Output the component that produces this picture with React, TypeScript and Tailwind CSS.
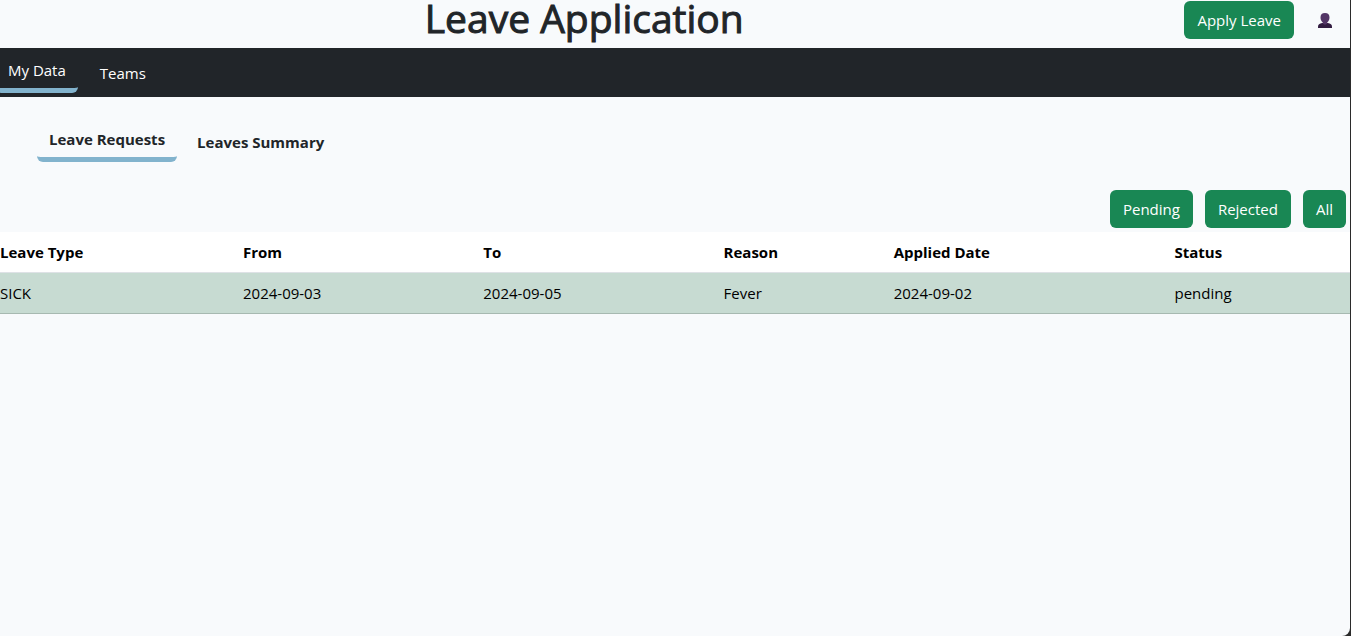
import { useState } from "react";

type Leave = {
  type: string;
  from: string;
  to: string;
  reason: string;
  applied: string;
  status: string;
};

const columns = [
  { label: "Leave Type", width: "w-[18%]" },
  { label: "From", width: "w-[17.8%]" },
  { label: "To", width: "w-[17.8%]" },
  { label: "Reason", width: "w-[12.6%]" },
  { label: "Applied Date", width: "w-[20.8%]" },
  { label: "Status", width: "w-[13%]" },
];

const leaves: Leave[] = [
  {
    type: "SICK",
    from: "2024-09-03",
    to: "2024-09-05",
    reason: "Fever",
    applied: "2024-09-02",
    status: "pending",
  },
];

function GreenButton({ children }: { children: string }) {
  return (
    <button
      type="button"
      className="h-[38px] rounded-md bg-[#198754] px-[13px] text-[15px] leading-6 whitespace-nowrap text-white"
    >
      {children}
    </button>
  );
}

function TabButton({
  label,
  active,
  onClick,
}: {
  label: string;
  active: boolean;
  onClick: () => void;
}) {
  return (
    <button
      type="button"
      onClick={onClick}
      className={
        active
          ? "rounded-md border-b-[5px] border-[#82b3cd] px-3 py-1.5"
          : "rounded-md px-3 py-1.5"
      }
    >
      {label}
    </button>
  );
}

function UserIcon() {
  return (
    <svg width="14" height="15" viewBox="0 0 14 15" aria-hidden="true">
      <path
        d="M0 15v-1.600c0-2 1.400-2.900 4.200-3.500h5.600c2.800.6 4.200 1.500 4.200 3.500V15z"
        fill="#321c41"
      />
      <path
        d="M7 0c2.900 0 4.500 1.600 4.500 4.200 0 2.300-.8 4.200-2.300 5.300v1.200L7 11.800l-2.200-1.100V9.500C3.300 8.400 2.500 6.500 2.500 4.200 2.500 1.600 4.100 0 7 0z"
        fill="#533566"
      />
    </svg>
  );
}

export default function App() {
  const [section, setSection] = useState("My Data");
  const [view, setView] = useState("Leave Requests");

  return (
    <div className="min-h-screen bg-[#2b2b2b] pr-px font-['Open_Sans','Noto_Sans',sans-serif] text-[15px] leading-6 text-[#212529]">
      <div className="min-h-screen rounded-br-lg bg-[#f8fafc]">
        <header className="flex h-12 items-start">
          <h1 className="flex-1 text-center text-[39px] leading-9 font-medium [-webkit-text-stroke:1px_currentColor]">
            Leave Application
          </h1>
          <div className="flex items-center gap-6 pt-px pr-[18px] pl-4">
            <GreenButton>Apply Leave</GreenButton>
            <button type="button" aria-label="Profile">
              <UserIcon />
            </button>
          </div>
        </header>

        <nav className="flex h-[49px] items-center bg-[#212529] text-white">
          <div className="-ml-1 flex items-center gap-2.5">
            {["My Data", "Teams"].map((label) => (
              <TabButton
                key={label}
                label={label}
                active={section === label}
                onClick={() => setSection(label)}
              />
            ))}
          </div>
        </nav>

        <main className="pt-6">
          <div className="flex items-center gap-2 pl-[37px] font-bold">
            {["Leave Requests", "Leaves Summary"].map((label) => (
              <TabButton
                key={label}
                label={label}
                active={view === label}
                onClick={() => setView(label)}
              />
            ))}
          </div>

          <div className="mt-7 mb-1 flex justify-end gap-3 pr-1">
            <GreenButton>Pending</GreenButton>
            <GreenButton>Rejected</GreenButton>
            <GreenButton>All</GreenButton>
          </div>

          <table className="w-full table-fixed border-collapse text-left text-black">
            <thead>
              <tr className="h-10 border-b border-[#dee2e6] bg-white">
                {columns.map((column) => (
                  <th key={column.label} className={column.width}>
                    {column.label}
                  </th>
                ))}
              </tr>
            </thead>
            <tbody>
              {leaves.map((leave) => (
                <tr
                  key={leave.from}
                  className="h-[41px] border-b border-[#a7b9b1] bg-[#c7dbd2]"
                >
                  <td>{leave.type}</td>
                  <td>{leave.from}</td>
                  <td>{leave.to}</td>
                  <td>{leave.reason}</td>
                  <td>{leave.applied}</td>
                  <td>{leave.status}</td>
                </tr>
              ))}
            </tbody>
          </table>
        </main>
      </div>
    </div>
  );
}
